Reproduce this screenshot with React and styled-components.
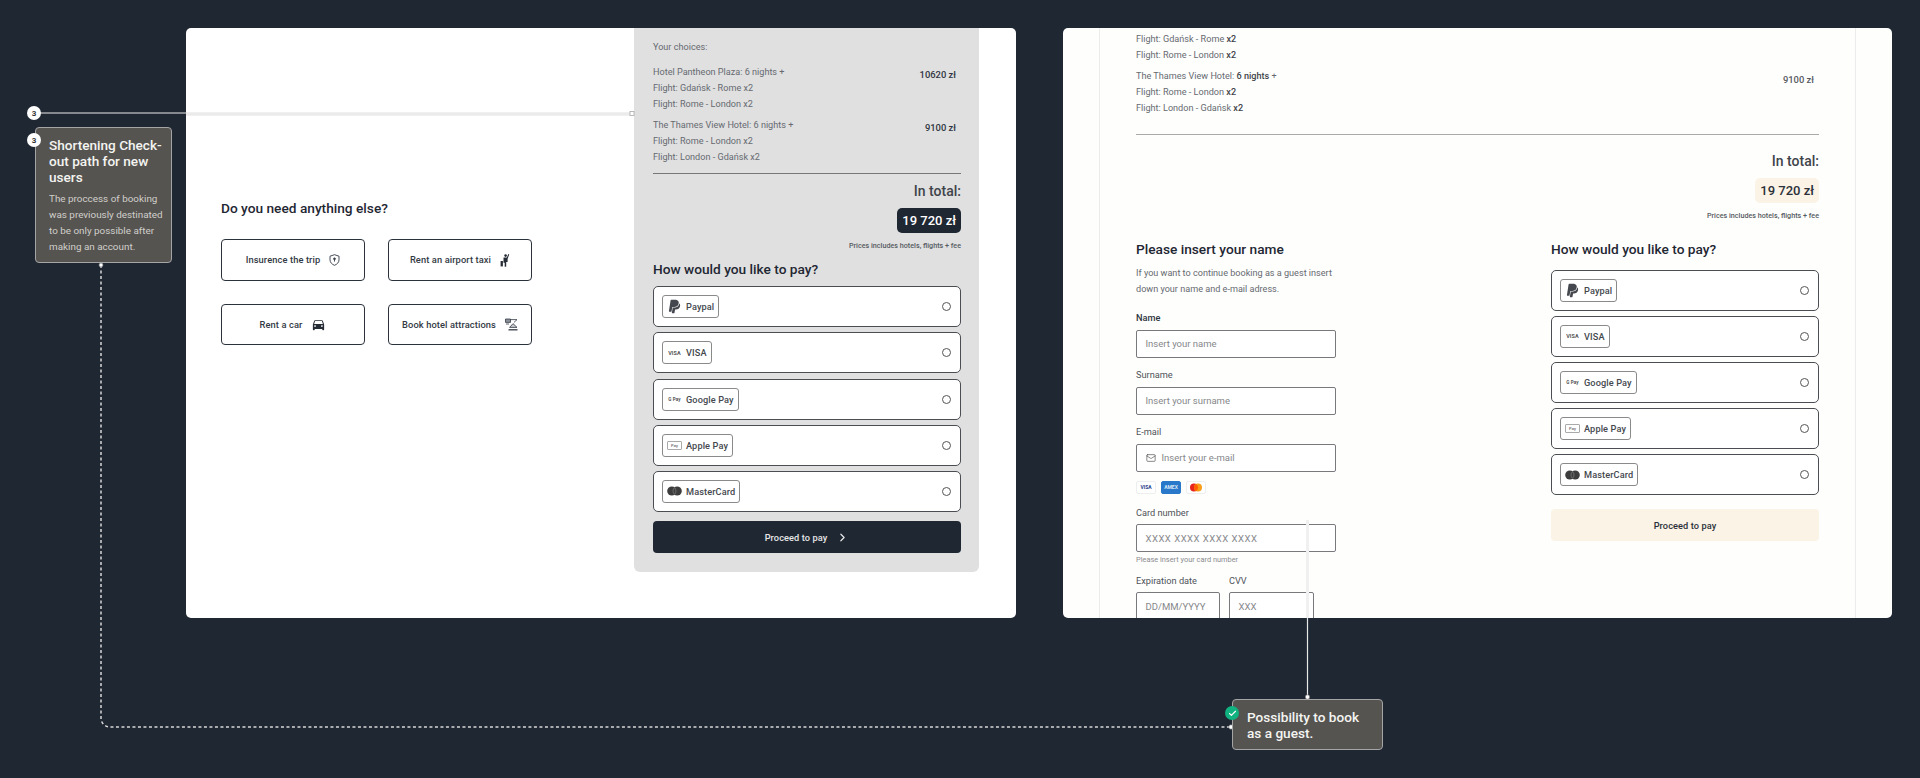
import React from "react";
import styled, { createGlobalStyle } from "styled-components";
import { ChevronRight, Mail, Check } from "lucide-react";
import { FaPaypal } from "react-icons/fa";
import { MdDirectionsCar } from "react-icons/md";

const INK = "#1f2733";
const CREAM = "#fbf3e5";

const Global = createGlobalStyle`
  html, body { margin: 0; padding: 0; background: ${INK}; }
  * { box-sizing: border-box; }
  body { font-family: "Roboto", "Noto Sans", sans-serif; }
`;

const Canvas = styled.div`
  position: relative;
  width: 1920px;
  height: 778px;
  overflow: hidden;
  background: ${INK};
  display: flex;
  gap: 47px;
  padding: 28px 0 0 186px;
`;

const Panel = styled.section`
  width: ${(p) => p.$w}px;
  height: 590px;
  background: ${(p) => p.$bg};
  border-radius: 5px;
  overflow: hidden;
  display: flex;
  justify-content: ${(p) => p.$justify || "flex-start"};
`;

const ExtrasColumn = styled.div`
  padding: 170px 0 0 35px;
`;

const SectionTitle = styled.h2`
  margin: 0 0 -1.2px;
  padding-top: 1.2px;
  font-size: 13.7px;
  line-height: 18px;
  font-weight: 500;
  color: ${INK};
`;

const ExtrasGrid = styled.div`
  margin-top: 23px;
  display: grid;
  grid-template-columns: 144px 144px;
  grid-auto-rows: 41.5px;
  gap: 23px;
`;

const ExtraButton = styled.div`
  border: 1.5px solid #2b323c;
  border-radius: 4px;
  display: flex;
  align-items: center;
  justify-content: center;
  gap: 9px;
  font-size: 9.3px;
  font-weight: 500;
  letter-spacing: 0.1px;
  color: #333a45;
  background: #fff;
`;

const SummaryCard = styled.aside`
  width: 345px;
  height: 544px;
  margin-right: 37px;
  background: #e0e0e0;
  border-radius: 0 0 6px 6px;
  padding: 10.7px 18px 0 19px;
`;

const MutedLine = styled.div`
  font-size: 9.1px;
  line-height: 16px;
  color: #666a70;
  white-space: nowrap;
  b { font-weight: 500; color: #3f4349; }
`;

const ChoiceRow = styled.div`
  display: flex;
  justify-content: space-between;
  margin-top: ${(p) => p.$top}px;
  padding-right: 5px;
`;

const ChoicePrice = styled.div`
  font-size: 9.4px;
  line-height: 16px;
  margin-top: ${(p) => p.$shift ?? 3}px;
  font-weight: 500;
  color: ${(p) => p.$color || "#2e3540"};
`;

const Divider = styled.div`
  height: 1px;
  background: ${(p) => p.$color};
  margin-top: ${(p) => p.$top}px;
`;

const TotalLabel = styled.div`
  margin-top: ${(p) => p.$top}px;
  text-align: right;
  font-size: 14px;
  line-height: 18px;
  font-weight: 500;
  color: #3f444b;
`;

const TotalRow = styled.div`
  display: flex;
  justify-content: flex-end;
  margin-top: 8.5px;
`;

const TotalPill = styled.div`
  height: 25px;
  padding: 0 5px;
  border-radius: 5px;
  display: flex;
  align-items: center;
  font-size: 13px;
  font-weight: 500;
  background: ${(p) => p.$bg};
  color: ${(p) => p.$fg};
`;

const Fine = styled.div`
  margin-top: 8px;
  text-align: right;
  font-size: 7.2px;
  line-height: 10px;
  font-weight: 500;
  color: #555a60;
`;

const PayTitle = styled(SectionTitle)`
  margin-top: ${(p) => p.$top || 0}px;
`;

const OptionList = styled.div`
  margin-top: ${(p) => p.$top}px;
  display: flex;
  flex-direction: column;
  gap: 5.2px;
`;

const Option = styled.div`
  height: 41px;
  background: #fff;
  border: 1.5px solid #4a4d52;
  border-radius: 5px;
  padding: 0 9px 0 8px;
  display: flex;
  align-items: center;
  justify-content: space-between;
`;

const Badge = styled.div`
  height: 23px;
  border: 1px solid #8a8a8a;
  border-radius: 3px;
  display: flex;
  align-items: center;
  gap: 4px;
  padding: 0 4px;
  font-size: 9.2px;
  font-weight: 500;
  letter-spacing: 0.1px;
  color: #44484e;
  white-space: nowrap;
`;

const BadgeIcon = styled.span`
  width: 15px;
  height: 15px;
  display: flex;
  align-items: center;
  justify-content: center;
  color: #44484e;
`;

const TinyMark = styled.span`
  font-size: ${(p) => p.$size || 5}px;
  font-weight: 700;
  white-space: nowrap;
  color: #555;
`;

const ApplePayMark = styled.span`
  width: 15px;
  height: 9px;
  border: 1px solid #aaa;
  border-radius: 1px;
  font-size: 4px;
  line-height: 7px;
  text-align: center;
  color: #666;
  white-space: nowrap;
`;

const Radio = styled.span`
  width: 9px;
  height: 9px;
  border: 1px solid #555;
  border-radius: 50%;
`;

const ProceedButton = styled.div`
  height: 32px;
  margin-top: ${(p) => p.$top}px;
  border-radius: 4px;
  background: ${(p) => p.$bg};
  color: ${(p) => p.$fg};
  display: flex;
  align-items: center;
  justify-content: center;
  gap: 9px;
  font-size: 9.2px;
  font-weight: 500;
  letter-spacing: 0.1px;
`;

const Gutter = styled.div`
  width: 757px;
  margin: 0 auto;
  padding: 0 36px;
  border-left: 1px solid #ececec;
  border-right: 1px solid #ececec;
  height: 590px;
`;

const ScrolledContent = styled.div`
  margin-top: 3px;
`;

const FormColumns = styled.div`
  margin-top: 17.3px;
  display: flex;
  justify-content: space-between;
`;

const FormColumn = styled.div`
  width: 200px;
`;

const PayColumn = styled.div`
  width: 268px;
`;

const Lead = styled(MutedLine)`
  margin-top: 9px;
`;

const FieldLabel = styled.div`
  font-size: 9.2px;
  line-height: 16px;
  font-weight: ${(p) => (p.$strong ? 500 : 400)};
  color: ${(p) => (p.$strong ? "#2e3540" : "#4e5359")};
  margin-top: ${(p) => p.$top}px;
  margin-bottom: 3.5px;
`;

const Input = styled.div`
  height: 28px;
  width: ${(p) => p.$w || 200}px;
  border: 1px solid #77797c;
  border-radius: 2px;
  padding: 0 8.5px;
  display: flex;
  align-items: center;
  gap: 6px;
  font-size: 9.5px;
  color: #85878a;
  background: #fff;
  white-space: nowrap;
  letter-spacing: ${(p) => p.$spread || 0}px;
`;

const CardRow = styled.div`
  display: flex;
  gap: 5px;
  margin-top: 9px;
`;

const CardChip = styled.div`
  width: 20px;
  height: 13.5px;
  border-radius: 2px;
  background: ${(p) => p.$bg || "#fff"};
  border: 1px solid ${(p) => p.$line || "#eee"};
  display: flex;
  align-items: center;
  justify-content: center;
  font-size: 5px;
  font-weight: 700;
  color: ${(p) => p.$fg || "#1f3a8a"};
  overflow: hidden;
`;

const Help = styled.div`
  font-size: 7.4px;
  line-height: 10px;
  margin-top: 3px;
  color: #8a8c8f;
`;

const SplitFields = styled.div`
  display: flex;
  gap: 9px;
`;

const Note = styled.div`
  position: absolute;
  left: ${(p) => p.$x}px;
  top: ${(p) => p.$y}px;
  width: ${(p) => p.$w}px;
  height: ${(p) => p.$h}px;
  background: #565450;
  border: 1px solid #a5a5a5;
  border-radius: 4px;
  padding: ${(p) => p.$pad};
`;

const NoteTitle = styled.div`
  font-size: 13.6px;
  line-height: 16.2px;
  font-weight: 500;
  color: #f4f4f2;
`;

const NoteBody = styled.div`
  margin-top: 6px;
  font-size: 9.9px;
  line-height: 16px;
  color: #d0cfcc;
`;

const NumberDot = styled.div`
  position: absolute;
  left: ${(p) => p.$x}px;
  top: ${(p) => p.$y}px;
  width: 14px;
  height: 14px;
  border-radius: 50%;
  background: #fff;
  display: flex;
  align-items: center;
  justify-content: center;
  font-size: 8px;
  font-weight: 700;
  color: #333;
`;

const CheckDot = styled(NumberDot)`
  background: #10b27f;
  color: #fff;
`;

const Connectors = styled.svg`
  position: absolute;
  left: 0;
  top: 0;
  pointer-events: none;
`;

const payments = [
  { name: "Paypal", icon: <FaPaypal size={15} /> },
  { name: "VISA", icon: <TinyMark $size={5.5}>VISA</TinyMark> },
  { name: "Google Pay", icon: <TinyMark $size={4.6}>G Pay</TinyMark> },
  { name: "Apple Pay", icon: <ApplePayMark>Pay</ApplePayMark> },
  {
    name: "MasterCard",
    icon: (
      <svg width="15" height="10" viewBox="0 0 15 10">
        <circle cx="4.8" cy="5" r="4.6" fill="#3d3d3d" />
        <circle cx="10.2" cy="5" r="4.6" fill="#3d3d3d" />
        <path d="M7.5 1.6a4.6 4.6 0 0 1 0 6.8M7.5 1.6a4.6 4.6 0 0 0 0 6.8" fill="none" stroke="#9a9a9a" strokeWidth="0.5" />
      </svg>
    ),
  },
];

const Shield = () => (
  <svg width="11" height="12" viewBox="0 0 11 12" fill="none" stroke="#333a45" strokeWidth="0.9">
    <path d="M5.5 .7 10 2.2v3.6c0 2.7-2 4.5-4.5 5.5C3 10.3 1 8.5 1 5.8V2.2z" />
    <circle cx="5.5" cy="4.8" r="0.9" fill="#333a45" />
    <path d="M5.5 5.2v2.4" />
  </svg>
);

const Taxi = () => (
  <svg width="10" height="14" viewBox="0 0 10 14" fill="#262c35">
    <circle cx="5.6" cy="2.6" r="1.3" />
    <path d="M3.5 4.5h3.4l1.4-3.4.9.4-1.6 4.6v3H6.2v4.6H4.7V9.8H3.5z" />
    <rect x="0.6" y="8" width="2.3" height="5.4" />
  </svg>
);

const Attractions = () => (
  <svg width="13" height="13" viewBox="0 0 13 13" fill="none" stroke="#333a45" strokeWidth="0.8">
    <path d="M.5 1h5v3.4h-5z" fill="#8d9097" />
    <path d="M5.5 1.6h6.5L9 4.4" />
    <path d="M8 5.6 12 9.4H4.6z" fill="#c9cacc" />
    <path d="M3.5 11.8H12.5" strokeWidth="1.3" />
    <path d="M1 6h3" />
  </svg>
);

function Payment({ top }) {
  return (
    <OptionList $top={top}>
      {payments.map((p) => (
        <Option key={p.name}>
          <Badge>
            <BadgeIcon>{p.icon}</BadgeIcon>
            {p.name}
          </Badge>
          <Radio />
        </Option>
      ))}
    </OptionList>
  );
}

function Totals({ labelTop, pillBg, pillFg }) {
  return (
    <>
      <TotalLabel $top={labelTop}>In total:</TotalLabel>
      <TotalRow>
        <TotalPill $bg={pillBg} $fg={pillFg}>19 720 zł</TotalPill>
      </TotalRow>
      <Fine>Prices includes hotels, flights + fee</Fine>
    </>
  );
}

export default function App() {
  return (
    <Canvas>
      <Global />
      <Panel $w={830} $bg="#fff" $justify="space-between">
        <ExtrasColumn>
          <SectionTitle>Do you need anything else?</SectionTitle>
          <ExtrasGrid>
            <ExtraButton>Insurence the trip <Shield /></ExtraButton>
            <ExtraButton>Rent an airport taxi <Taxi /></ExtraButton>
            <ExtraButton>Rent a car <MdDirectionsCar size={15} color="#262c35" /></ExtraButton>
            <ExtraButton>Book hotel attractions <Attractions /></ExtraButton>
          </ExtrasGrid>
        </ExtrasColumn>
        <SummaryCard>
          <MutedLine>Your choices:</MutedLine>
          <ChoiceRow $top={9.5}>
            <div>
              <MutedLine>Hotel Pantheon Plaza: 6 nights +</MutedLine>
              <MutedLine>Flight: Gdańsk - Rome x2</MutedLine>
              <MutedLine>Flight: Rome - London x2</MutedLine>
            </div>
            <ChoicePrice>10620 zł</ChoicePrice>
          </ChoiceRow>
          <ChoiceRow $top={5}>
            <div>
              <MutedLine>The Thames View Hotel: 6 nights +</MutedLine>
              <MutedLine>Flight: Rome - London x2</MutedLine>
              <MutedLine>Flight: London - Gdańsk x2</MutedLine>
            </div>
            <ChoicePrice>9100 zł</ChoicePrice>
          </ChoiceRow>
          <Divider $color="#777" $top={7.5} />
          <Totals labelTop={8} pillBg={INK} pillFg="#fff" />
          <PayTitle $top={7.5}>How would you like to pay?</PayTitle>
          <Payment top={9.5} />
          <ProceedButton $bg={INK} $fg="#e8e8e8" $top={9.5}>
            Proceed to pay <ChevronRight size={13} strokeWidth={2.2} />
          </ProceedButton>
        </SummaryCard>
      </Panel>

      <Panel $w={829} $bg="#fefefd">
        <Gutter>
          <ScrolledContent>
            <ChoiceRow $top={0}>
              <div>
                <MutedLine>Flight: Gdańsk - Rome <b>x2</b></MutedLine>
                <MutedLine>Flight: Rome - London <b>x2</b></MutedLine>
              </div>
              <ChoicePrice $color="#55595f" $shift={-14}>10620 zł</ChoicePrice>
            </ChoiceRow>
            <ChoiceRow $top={4.6}>
              <div>
                <MutedLine>The Thames View Hotel: <b>6 nights</b> +</MutedLine>
                <MutedLine>Flight: Rome - London <b>x2</b></MutedLine>
                <MutedLine>Flight: London - Gdańsk <b>x2</b></MutedLine>
              </div>
              <ChoicePrice $color="#55595f" $shift={4}>9100 zł</ChoicePrice>
            </ChoiceRow>
            <Divider $color="#aaa" $top={18} />
            <Totals labelTop={17} pillBg={CREAM} pillFg="#2a303a" />
            <FormColumns>
              <FormColumn>
                <SectionTitle>Please insert your name</SectionTitle>
                <Lead>If you want to continue booking as a guest insert</Lead>
                <MutedLine>down your name and e-mail adress.</MutedLine>
                <FieldLabel $strong $top={12.7}>Name</FieldLabel>
                <Input>Insert your name</Input>
                <FieldLabel $top={9.5}>Surname</FieldLabel>
                <Input>Insert your surname</Input>
                <FieldLabel $top={9.5}>E-mail</FieldLabel>
                <Input><Mail size={10} color="#444" strokeWidth={1.5} />Insert your e-mail</Input>
                <CardRow>
                  <CardChip>VISA</CardChip>
                  <CardChip $bg="#2a78c9" $line="#2a78c9" $fg="#dbe9f7">AMEX</CardChip>
                  <CardChip>
                    <svg width="14" height="9" viewBox="0 0 14 9">
                      <circle cx="5" cy="4.5" r="4" fill="#e8251d" />
                      <circle cx="9" cy="4.5" r="4" fill="#f79e1b" />
                      <path d="M7 1a4 4 0 0 1 0 7a4 4 0 0 1 0-7z" fill="#ff5f00" />
                    </svg>
                  </CardChip>
                </CardRow>
                <FieldLabel $top={10.5}>Card number</FieldLabel>
                <Input $spread={0.5}>XXXX XXXX XXXX XXXX</Input>
                <Help>Please insert your card number</Help>
                <SplitFields>
                  <div>
                    <FieldLabel $top={7.5}>Expiration date</FieldLabel>
                    <Input $w={84}>DD/MM/YYYY</Input>
                  </div>
                  <div>
                    <FieldLabel $top={7.5}>CVV</FieldLabel>
                    <Input $w={85}>XXX</Input>
                  </div>
                </SplitFields>
              </FormColumn>
              <PayColumn>
                <SectionTitle>How would you like to pay?</SectionTitle>
                <Payment top={13.3} />
                <ProceedButton $bg={CREAM} $fg="#2a303a" $top={14}>Proceed to pay</ProceedButton>
              </PayColumn>
            </FormColumns>
          </ScrolledContent>
        </Gutter>
      </Panel>

      <Connectors width="1920" height="778" viewBox="0 0 1920 778" fill="none">
        <path d="M34 113H186" stroke="#a9abad" strokeWidth="1.5" />
        <path d="M186 114H630" stroke="#ebebeb" strokeWidth="3.5" />
        <rect x="630" y="111.5" width="4" height="4" fill="#fff" stroke="#aaa" strokeWidth="0.8" />
        <path d="M101 265V718a9 9 0 0 0 9 9H1231" stroke="#d8d8d8" strokeWidth="1.5" strokeDasharray="3 2.5" />
        <circle cx="101" cy="265" r="2" fill="#fff" stroke="#777" strokeWidth="0.6" />
        <circle cx="1231" cy="727" r="2.2" fill="#fff" stroke="#777" strokeWidth="0.6" />
        <path d="M1307.5 520V618" stroke="#f0f0f0" strokeWidth="3" />
        <path d="M1307.5 618V697" stroke="#e8e8e8" strokeWidth="1.2" />
        <circle cx="1307.5" cy="697" r="2.2" fill="#fff" stroke="#777" strokeWidth="0.6" />
      </Connectors>

      <NumberDot $x={27} $y={106}>3</NumberDot>
      <Note $x={35} $y={126.5} $w={137} $h={136.5} $pad="9px 4px 0 13px">
        <NoteTitle>Shortening Check-out path for new users</NoteTitle>
        <NoteBody>The proccess of booking was previously destinated to be only possible after making an account.</NoteBody>
      </Note>
      <NumberDot $x={27} $y={133}>3</NumberDot>
      <Note $x={1232} $y={699} $w={151} $h={51} $pad="8.5px 8px 0 14px">
        <NoteTitle>Possibility to book as a guest.</NoteTitle>
      </Note>
      <CheckDot $x={1225} $y={706}><Check size={9} strokeWidth={3} /></CheckDot>
    </Canvas>
  );
}
